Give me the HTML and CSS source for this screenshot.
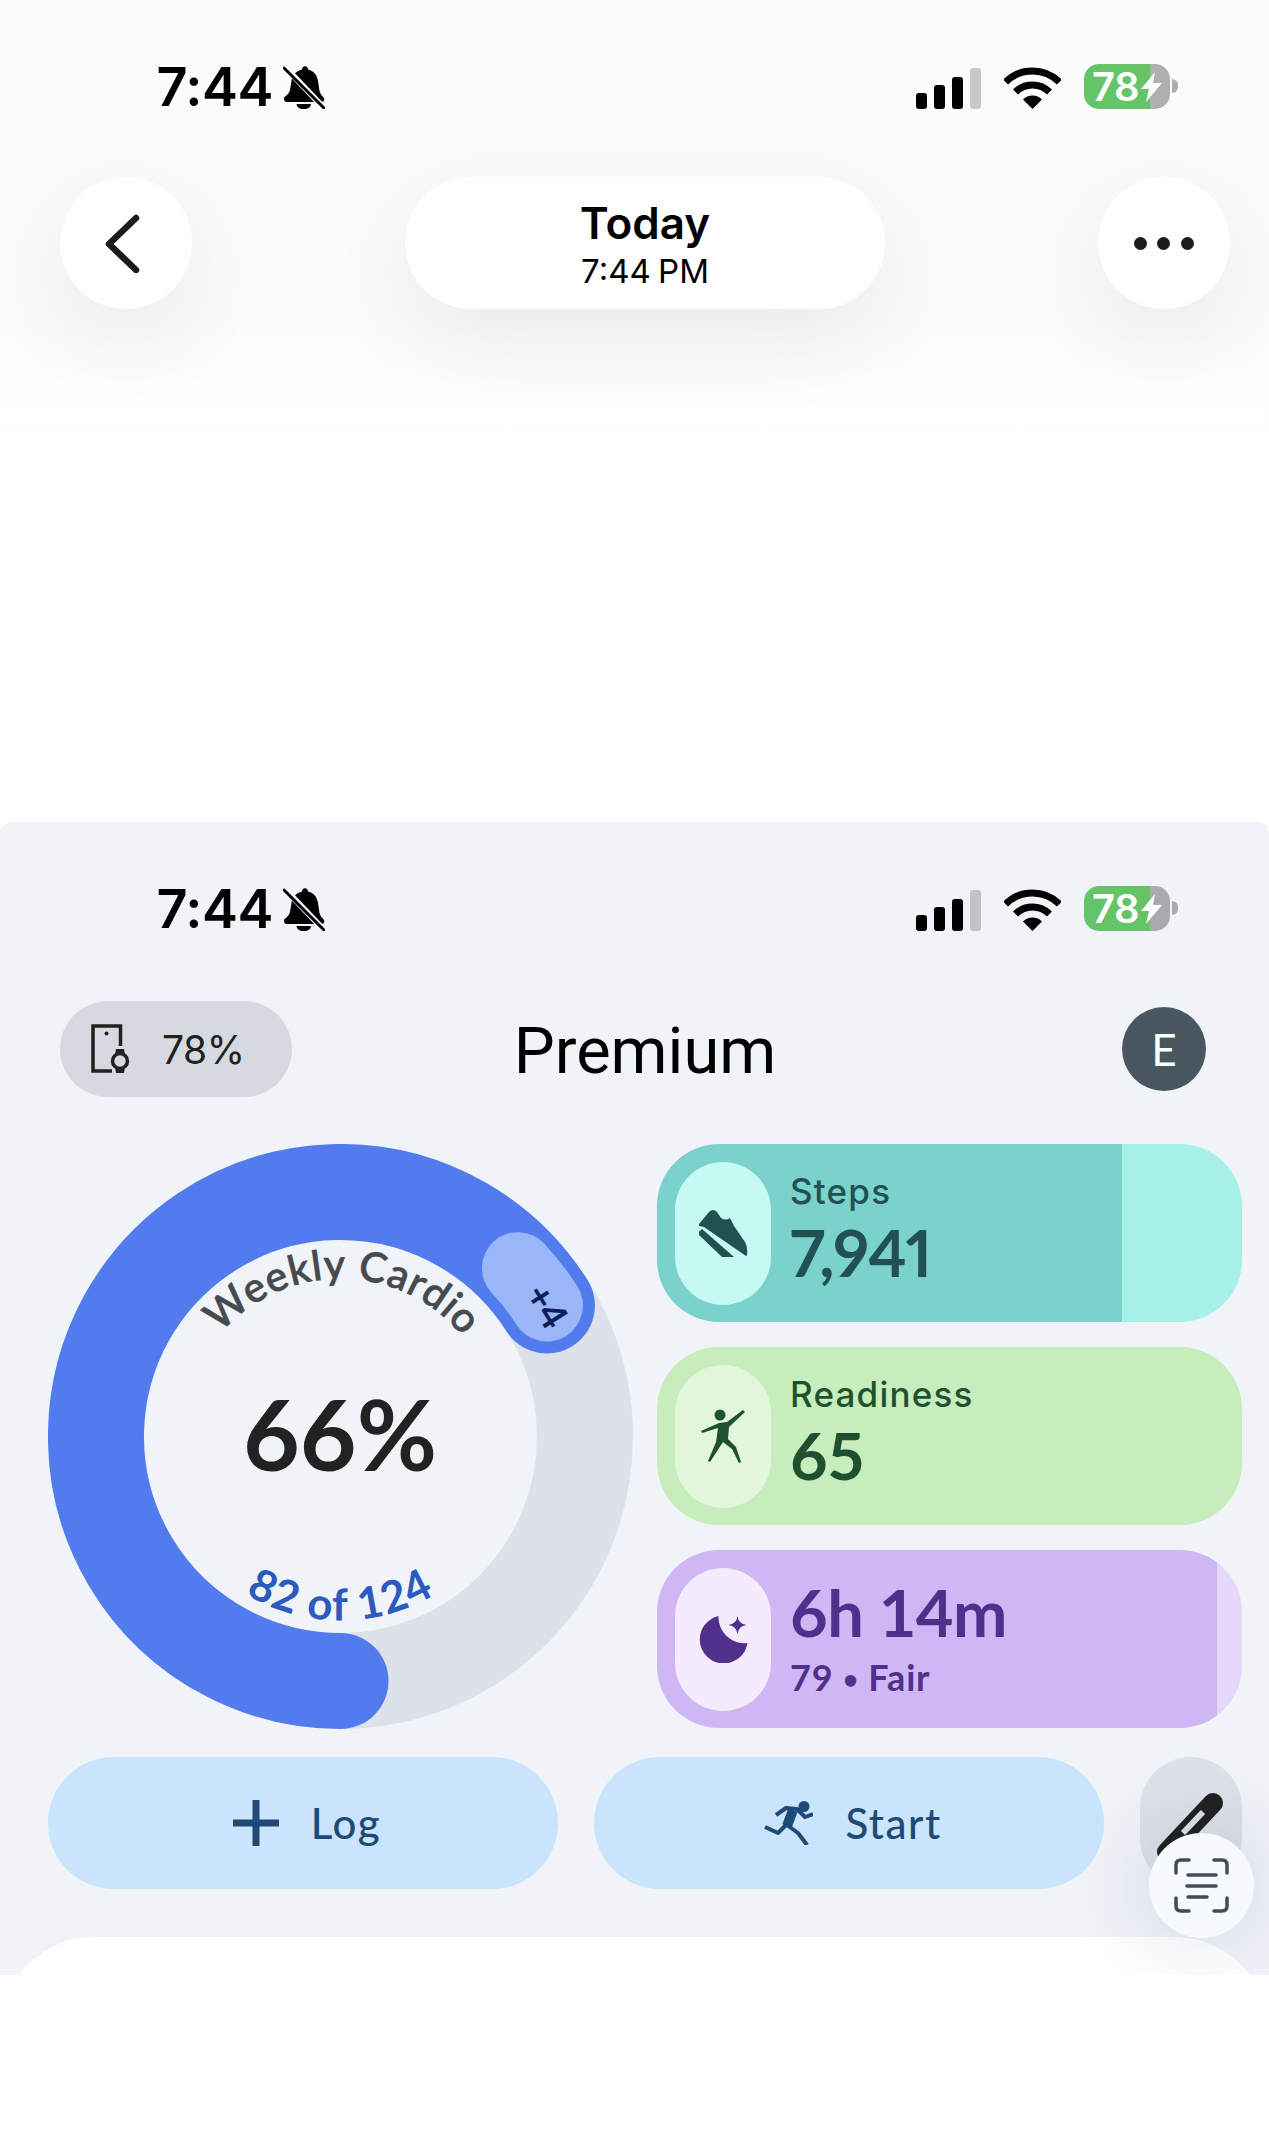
FILE: index.html
```html
<!DOCTYPE html>
<html lang="en">

<head>
    <meta charset="UTF-8">
    <meta name="viewport" content="width=device-width, initial-scale=1.0">
    <title>Today</title>
    <link rel="stylesheet" href="styles.css">
</head>

<body>

    <!-- status bar icons, used twice -->
    <svg class="icon-defs" aria-hidden="true">
        <symbol id="bell-off" viewBox="0 0 42 44">
            <path d="M19 4.500C19 0 25 0 25 4.500C31 6 34 10 35 16L36.500 26C37 29 39.500 31 41 33C42 36 40 37 38 37H4C2 37 0 35 1.500 32C4 30 6.500 28 7 25L8.500 16C9.500 10 13 6 19 4.500Z" />
            <path class="bell-clapper" d="M13.500 39H28C28 46 13.500 46 13.500 39Z" />
            <path class="bell-gap" d="M0 0L42 44" />
            <path class="bell-slash" d="M1 3L41 43" />
        </symbol>
        <symbol id="wifi" viewBox="0 0 57 42">
            <path class="wifi-arc" d="M1.600 15.100A38 38 0 0 1 55.400 15.100" />
            <path class="wifi-arc" d="M11.500 25A24 24 0 0 1 45.500 25" />
            <path d="M28.500 42L19 32.500A13.400 13.400 0 0 1 38 32.500Z" />
        </symbol>
        <symbol id="bolt" viewBox="0 0 21 30">
            <path d="M14 0L0 17H8L5 30L21 11H12Z" />
        </symbol>
    </svg>

    <main class="page">

        <section class="today">

            <div class="status-bar">
                <span class="status-time">7:44</span>
                <svg class="status-bell"><use href="#bell-off" /></svg>
                <div class="status-right">
                    <div class="signal"><span></span><span></span><span></span><span class="off"></span></div>
                    <svg class="status-wifi"><use href="#wifi" /></svg>
                    <div class="battery">78<svg class="battery-bolt"><use href="#bolt" /></svg></div>
                </div>
            </div>

            <nav class="top-nav">
                <div class="round-button">
                    <svg class="chevron" viewBox="0 0 36 60">
                        <path d="M31 5L4 31L31 57" />
                    </svg>
                </div>
                <div class="date-pill">
                    <div class="date-title">Today</div>
                    <div class="date-time">7:44 PM</div>
                </div>
                <div class="round-button">
                    <div class="dots"><span></span><span></span><span></span></div>
                </div>
            </nav>

        </section>

        <section class="panel">

            <div class="status-bar">
                <span class="status-time">7:44</span>
                <svg class="status-bell"><use href="#bell-off" /></svg>
                <div class="status-right">
                    <div class="signal"><span></span><span></span><span></span><span class="off"></span></div>
                    <svg class="status-wifi"><use href="#wifi" /></svg>
                    <div class="battery">78<svg class="battery-bolt"><use href="#bolt" /></svg></div>
                </div>
            </div>

            <header class="panel-header">
                <div class="device-pill">
                    <svg class="device-icon" viewBox="0 0 40 50">
                        <path class="device-line" d="M29.500 22V2H2V47H21" />
                        <circle class="device-dot" cx="15.500" cy="9.500" r="2" />
                        <circle class="device-line" cx="29" cy="37" r="7.500" />
                        <path d="M24 31L25 25H33L34 31ZM24 43L25 49H33L34 43Z" />
                    </svg>
                    <span>78%</span>
                </div>
                <h1 class="panel-title">Premium</h1>
                <div class="avatar">E</div>
            </header>

            <div class="hero">

                <svg class="ring" viewBox="0 0 585 585">
                    <defs>
                        <path id="arc-top" d="M134.500 292.500A158 158 0 0 1 450.500 292.500" />
                        <path id="arc-bottom" d="M108.500 292.500A184 184 0 0 0 476.500 292.500" />
                    </defs>
                    <circle class="ring-track" cx="292.500" cy="292.500" r="244.500" />
                    <path class="ring-fill" d="M292.500 537A244.500 244.500 0 1 1 498.900 161.500" />
                    <path class="ring-extra" d="M469.900 124.200A244.500 244.500 0 0 1 498.900 161.500" />
                    <text class="ring-label">
                        <textPath href="#arc-top" startOffset="50.500%">Weekly Cardio</textPath>
                    </text>
                    <text class="ring-count">
                        <textPath href="#arc-bottom" startOffset="50%">82 of 124</textPath>
                    </text>
                    <text class="ring-percent" x="292" y="327">66%</text>
                    <text class="ring-plus" x="292.500" y="62" transform="rotate(57.700 292.500 292.500)">+4</text>
                </svg>

                <div class="cards">

                    <article class="card card-steps">
                        <div class="card-icon">
                            <svg class="icon-shoe" viewBox="0 0 50 48">
                                <path d="M1 15L11 3Q15 -1 19 3L23 9Q28 12 32 9L36 17L47 33Q50 38 49 46L48 47L6 18L1 17Z" />
                                <path d="M1 23L4 20L36 48H24L1 26Z" />
                            </svg>
                        </div>
                        <div class="card-text">
                            <div class="card-label">Steps</div>
                            <div class="card-value">7,941</div>
                        </div>
                    </article>

                    <article class="card card-ready">
                        <div class="card-icon">
                            <svg class="icon-ready" viewBox="0 0 46 55">
                                <circle cx="20" cy="6" r="5.500" />
                                <path d="M43 1L45 3L29 18L28 30L36 38L41 53L39 54L32 40L23 33L10 53L8 52L16 33L18 19L2 24L1 22L19 14L27 13Z" />
                            </svg>
                        </div>
                        <div class="card-text">
                            <div class="card-label">Readiness</div>
                            <div class="card-value">65</div>
                        </div>
                    </article>

                    <article class="card card-sleep">
                        <div class="card-icon">
                            <svg class="icon-moon" viewBox="0 0 49 48">
                                <path d="M19.500 1A24 24 0 1 0 48.500 28A26 26 0 0 1 19.500 1Z" />
                                <path d="M38.500 1Q39.500 9 47.500 10Q39.500 11 38.500 19Q37.500 11 29.500 10Q37.500 9 38.500 1Z" />
                            </svg>
                        </div>
                        <div class="card-text">
                            <div class="card-value">6h 14m</div>
                            <div class="card-sub">79 <span class="card-dot">•</span> Fair</div>
                        </div>
                    </article>

                </div>

            </div>

            <div class="actions">
                <div class="action-button">
                    <svg class="icon-plus" viewBox="0 0 46 46">
                        <path d="M23 0V46M0 23H46" />
                    </svg>
                    <span>Log</span>
                </div>
                <div class="action-button">
                    <svg class="icon-run" viewBox="0 0 49 44">
                        <circle cx="40" cy="5.500" r="5.500" />
                        <path class="run-thin" d="M12 14L22 7L33 8L41 16L49 13M1 26L14 32L23 23M23 24L34 32L43 44" />
                        <path class="run-body" d="M29 9L23 25" />
                    </svg>
                    <span>Start</span>
                </div>
                <div class="edit-button">
                    <svg class="icon-pen" viewBox="0 0 70 66">
                        <path class="pen-body" d="M57 13L11 62" />
                        <path class="pen-slot" d="M47 22L27 43" />
                    </svg>
                </div>
            </div>

            <div class="sheet"></div>

            <div class="scan-button">
                <svg class="icon-scan" viewBox="0 0 55 55">
                    <path d="M2 15V7Q2 2 7 2H15M40 2H48Q53 2 53 7V15M2 40V48Q2 53 7 53H15M53 40V48Q53 53 48 53H40M14 17H42M13 28H42M14 39H33" />
                </svg>
            </div>

        </section>

    </main>

</body>

</html>
```

FILE: styles.css
```css
/*      Variables       */
:root {
    --page-top: #fbfbfb;
    --panel: #f0f4f9;
    --ink: #1c1c1c;
    --blue: #527cee;
    --blue-dark: #2c5abf;
    --action: #c9e4fb;
    --action-ink: #1f4a78;
}

/*      Reset Styles    */
html {
    box-sizing: border-box;
    font-family: "Lato", "Liberation Sans", sans-serif;
}

body {
    margin: 0;
    padding: 0;
    background-color: #fff;
    overflow-x: hidden;
}

*,
*::before,
*::after {
    box-sizing: inherit;
}

.icon-defs {
    position: absolute;
    width: 0;
    height: 0;
}

.page {
    min-height: 2154px;
    background-color: #fff;
}

/*      Status bar      */
.status-bar {
    --gap-color: var(--page-top);
    display: flex;
    align-items: center;
    height: 45px;
    padding-left: 156.500px;
    color: #000;
}

.panel .status-bar {
    --gap-color: var(--panel);
}

.status-time {
    font-family: "Inter", sans-serif;
    font-size: 54px;
    font-weight: 600;
    line-height: 1;
    letter-spacing: -.5px;
}

.status-bell {
    width: 42px;
    height: 44px;
    margin-left: 10.500px;
    fill: #000;
}

.bell-gap {
    fill: none;
    stroke: var(--gap-color);
    stroke-width: 6;
}

.bell-slash {
    fill: none;
    stroke: #000;
    stroke-width: 3;
    stroke-linecap: round;
}

.status-right {
    display: flex;
    align-items: center;
    gap: 23px;
    margin-left: auto;
    padding-right: 99.5px;
}

.signal {
    display: flex;
    align-items: flex-end;
    gap: 7px;
    height: 41px;
    margin-top: 3px;
}

.signal span {
    width: 11px;
    height: 16px;
    border-radius: 3px;
    background-color: #000;
}

.signal span:nth-child(2) {
    height: 24px;
}

.signal span:nth-child(3) {
    height: 32px;
}

.signal .off {
    height: 41px;
    background-color: rgba(0, 0, 0, .2);
}

.status-wifi {
    width: 57px;
    height: 42px;
    margin-top: 2px;
    fill: #000;
}

.wifi-arc {
    fill: none;
    stroke: #000;
    stroke-width: 7;
}

.battery {
    position: relative;
    display: flex;
    align-items: center;
    width: 85.5px;
    height: 45px;
    padding-left: 8px;
    border-radius: 15px;
    background: linear-gradient(to right, #66c468 65.5px, rgba(0, 0, 0, .3) 65.5px);
    font-family: "Inter", sans-serif;
    font-size: 40px;
    font-weight: 600;
    line-height: 1;
    letter-spacing: -.5px;
    color: #fff;
}

.battery::after {
    content: "";
    position: absolute;
    top: 15px;
    right: -8px;
    width: 6px;
    height: 14px;
    border-radius: 0 6px 6px 0;
    background-color: rgba(0, 0, 0, .3);
}

.battery-bolt {
    width: 21px;
    height: 30px;
    margin-left: 2px;
    fill: #fff;
}

/*      Top section     */
.today {
    height: 822px;
    padding-top: 64px;
    background: linear-gradient(to bottom, var(--page-top) 0, var(--page-top) 320px, #fff 470px);
}

.top-nav {
    display: flex;
    justify-content: space-between;
    margin-top: 68px;
    padding: 0 39px 0 60px;
}

.round-button,
.date-pill {
    display: flex;
    align-items: center;
    justify-content: center;
    height: 132px;
    border-radius: 66px;
    background-color: #fff;
    box-shadow: 0 30px 90px rgba(0, 0, 0, .07);
}

.round-button {
    width: 132px;
}

.chevron {
    width: 36px;
    height: 60px;
    margin-left: -6px;
    fill: none;
    stroke: var(--ink);
    stroke-width: 6.500;
    stroke-linecap: round;
    stroke-linejoin: round;
}

.dots {
    display: flex;
    gap: 10.500px;
    margin-left: -1px;
}

.dots span {
    width: 13px;
    height: 13px;
    border-radius: 50%;
    background-color: var(--ink);
}

.date-pill {
    flex-direction: column;
    width: 480px;
    padding-top: 2px;
    font-family: "Inter", sans-serif;
    color: #000;
}

.date-title {
    font-size: 44px;
    font-weight: 600;
    line-height: 54px;
}

.date-time {
    font-size: 33px;
    line-height: 42px;
    word-spacing: -2px;
}

/*      Panel           */
.panel {
    position: relative;
    height: 1153px;
    padding-top: 64px;
    border-radius: 12px 12px 0 0;
    background-color: var(--panel);
    overflow: hidden;
}

.panel-header {
    display: grid;
    grid-template-columns: 1fr auto 1fr;
    align-items: center;
    margin-top: 70px;
    padding: 0 39px 0 60px;
}

.device-pill {
    display: flex;
    align-items: center;
    gap: 31px;
    width: 232px;
    height: 96px;
    padding-left: 31px;
    border-radius: 48px;
    background-color: #d6dae0;
    font-family: "Inter", sans-serif;
    font-size: 39px;
    letter-spacing: -.5px;
    color: #222;
}

.device-icon {
    width: 40px;
    height: 50px;
    fill: #222;
}

.device-line {
    fill: none;
    stroke: #222;
    stroke-width: 3.500;
}

.panel-title {
    margin: 0;
    padding-top: 5px;
    font-family: "Roboto", sans-serif;
    font-size: 65px;
    font-weight: 400;
    line-height: 1;
    color: #000;
}

.avatar {
    justify-self: end;
    display: grid;
    place-content: center;
    width: 84px;
    height: 84px;
    margin-right: 24px;
    border-radius: 50%;
    background-color: #495761;
    font-size: 44px;
    color: #fff;
}

/*      Ring and cards  */
.hero {
    display: flex;
    gap: 24px;
    margin-top: 47px;
    padding-left: 48px;
}

.ring {
    flex: none;
    width: 585px;
    height: 585px;
}

.ring-track,
.ring-fill,
.ring-extra {
    fill: none;
    stroke-linecap: round;
}

.ring-track {
    stroke: #dde1ea;
    stroke-width: 96;
}

.ring-fill {
    stroke: var(--blue);
    stroke-width: 96;
}

.ring-extra {
    stroke: #98b6f8;
    stroke-width: 72;
}

.ring-label {
    font-size: 41px;
    font-weight: 500;
    letter-spacing: 1px;
    text-anchor: middle;
    fill: #474a4d;
    stroke: #474a4d;
    stroke-width: .8;
}

.ring-count {
    font-size: 44px;
    font-weight: 700;
    letter-spacing: 1.300px;
    text-anchor: middle;
    fill: var(--blue-dark);
}

.ring-percent {
    font-size: 98px;
    font-weight: 700;
    text-anchor: middle;
    fill: #222;
}

.ring-plus {
    font-size: 38px;
    font-weight: 700;
    text-anchor: middle;
    fill: #0b1f5c;
}

.cards {
    display: flex;
    flex-direction: column;
    gap: 25px;
    width: 585px;
}

.card {
    display: flex;
    align-items: center;
    gap: 19px;
    height: 178px;
    padding-left: 18px;
    border-radius: 62px;
}

.card-icon {
    display: grid;
    place-content: center;
    width: 96px;
    height: 143px;
    border-radius: 48px;
}

.card-label {
    margin: -10px 0 4px;
    font-family: "Inter", sans-serif;
    font-size: 35px;
    font-weight: 500;
    line-height: 44px;
    letter-spacing: 1.200px;
}

.card-value {
    font-size: 65px;
    font-weight: 700;
    line-height: 70px;
    letter-spacing: -.5px;
}

.card-steps .card-value {
    letter-spacing: -1px;
    font-variant-numeric: proportional-nums;
}

.card-sub {
    margin-top: 7px;
    font-size: 36px;
    font-weight: 700;
    line-height: 46px;
    letter-spacing: .8px;
}

.card-dot {
    font-size: 26px;
    vertical-align: 2px;
}

.card-steps {
    background: linear-gradient(to right, #7bd2cc 465px, #a8f1e9 465px);
    color: #215150;
}

.card-steps .card-icon {
    background-color: #c5faf4;
}

.card-ready {
    background-color: #c7edbd;
    color: #1f5130;
}

.card-ready .card-icon {
    background-color: #e2f6dc;
}

.card-sleep {
    background: linear-gradient(to right, #cfb7f5 560.500px, #e6d8fb 560.500px);
    color: #51308c;
}

.card-sleep .card-icon {
    background-color: #f5ebfe;
}

.card-icon svg {
    display: block;
    fill: currentColor;
}

.icon-shoe {
    width: 50px;
    height: 48px;
}

.icon-ready {
    width: 46px;
    height: 55px;
}

.icon-moon {
    width: 49px;
    height: 48px;
}

/*      Actions         */
.actions {
    display: flex;
    gap: 36px;
    margin-top: 28px;
    padding-left: 48px;
}

.action-button {
    display: flex;
    align-items: center;
    justify-content: center;
    gap: 32px;
    width: 510px;
    height: 132px;
    padding-left: 8px;
    border-radius: 66px;
    background-color: var(--action);
    font-size: 42px;
    font-weight: 500;
    letter-spacing: 1.500px;
    color: var(--action-ink);
}

.icon-plus {
    width: 46px;
    height: 46px;
    fill: none;
    stroke: var(--action-ink);
    stroke-width: 7;
}

.icon-run {
    width: 49px;
    height: 44px;
    fill: var(--action-ink);
}

.run-thin {
    fill: none;
    stroke: var(--action-ink);
    stroke-width: 4;
    stroke-linejoin: round;
}

.run-body {
    fill: none;
    stroke: var(--action-ink);
    stroke-width: 10;
}

.edit-button {
    display: grid;
    place-content: center;
    width: 102px;
    height: 132px;
    border-radius: 51px;
    background-color: #dde1e8;
}

.icon-pen {
    display: block;
    width: 70px;
    height: 66px;
    overflow: visible;
}

.pen-body {
    fill: none;
    stroke: #222;
    stroke-width: 20;
    stroke-linecap: round;
}

.pen-slot {
    fill: none;
    stroke: #dde1e8;
    stroke-width: 6;
}

.sheet {
    height: 95px;
    margin-top: 48px;
    border-radius: 95px 95px 0 0;
    background-color: #fff;
}

.scan-button {
    position: absolute;
    top: 1011px;
    right: 15px;
    display: grid;
    place-content: center;
    width: 105px;
    height: 105px;
    border-radius: 50%;
    background-color: #f6f9fd;
    box-shadow: 0 0 90px rgba(20, 30, 60, .16);
}

.icon-scan {
    display: block;
    width: 55px;
    height: 55px;
    fill: none;
    stroke: #444b55;
    stroke-width: 3.500;
    stroke-linecap: round;
}
```
